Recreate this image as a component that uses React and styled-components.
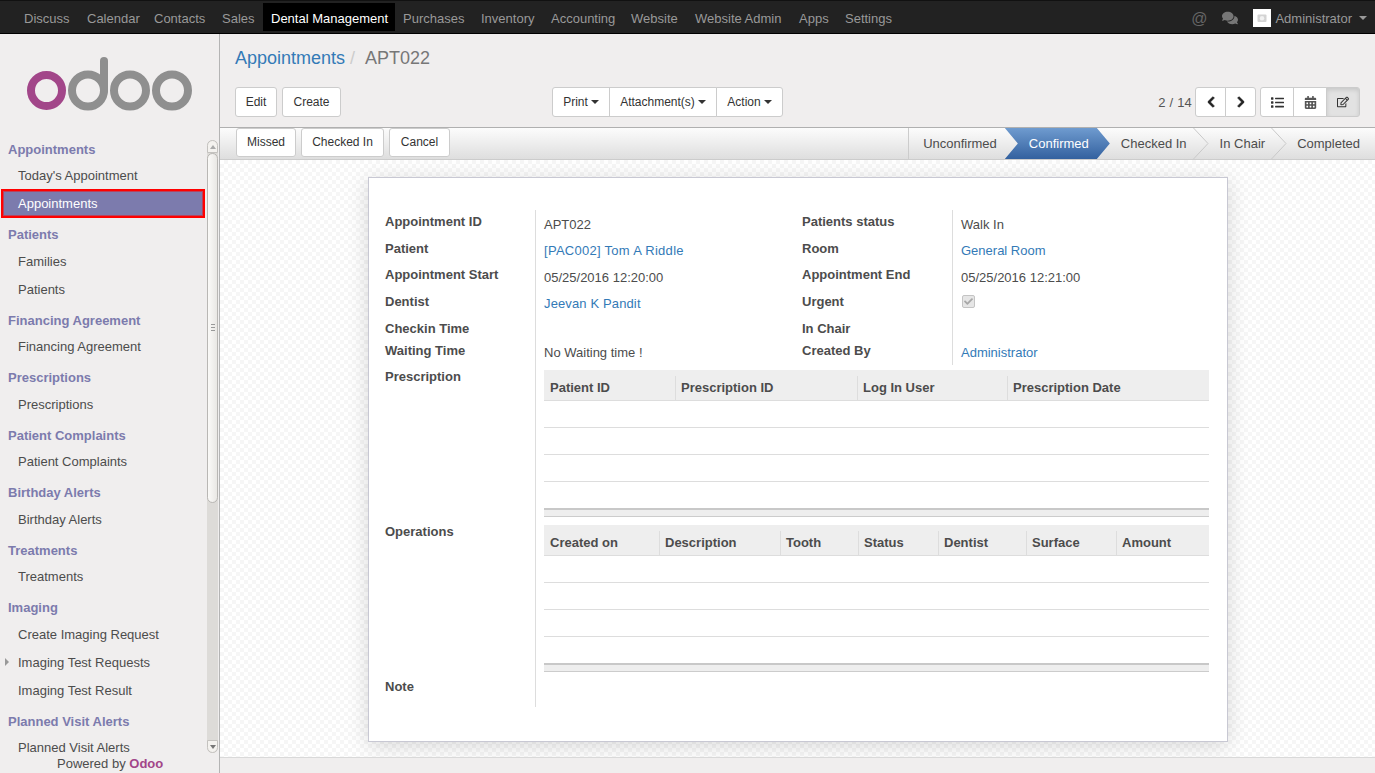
// App.jsx
import React from 'react';
import styled, { createGlobalStyle } from 'styled-components';
import {
  FaComments,
  FaChevronLeft,
  FaChevronRight,
  FaList,
  FaCalendarAlt,
  FaRegEdit,
  FaCheck,
} from 'react-icons/fa';

const GlobalStyle = createGlobalStyle`
  html, body {
    margin: 0;
    height: 100%;
    overflow: hidden;
  }
  body {
    font-family: "Liberation Sans", Arial, sans-serif;
    font-size: 13px;
    line-height: 15px;
    color: #4c4c4c;
  }
  * {
    box-sizing: border-box;
  }
`;

const Page = styled.div`
  display: flex;
  flex-direction: column;
  width: 100%;
  height: 100vh;
  overflow: hidden;
`;

const TopBar = styled.div`
  display: flex;
  align-items: flex-start;
  justify-content: space-between;
  flex: 0 0 34px;
  padding: 3px 8px 0 16px;
  background: #222;
  border-top: 1px solid #111;
  border-bottom: 1px solid #000;
`;

const TopMenu = styled.div`
  display: flex;
`;

const TopItem = styled.div`
  width: ${(props) => props.$w}px;
  height: 28px;
  margin-top: -1px;
  padding-left: 8px;
  line-height: 31px;
  white-space: nowrap;
  color: ${(props) => (props.$active ? '#fff' : '#999')};
  background: ${(props) => (props.$active ? '#000' : 'transparent')};
`;

const TopRight = styled.div`
  display: flex;
  align-items: center;
  height: 28px;
  color: #777;
`;

const TopIcon = styled.span`
  display: flex;
  font-size: ${(props) => props.$size}px;
  margin-right: ${(props) => props.$gap}px;
`;

const AtSign = styled.span`
  margin-right: 15px;
  font-size: 16px;
  color: #666;
`;

const Avatar = styled.span`
  display: flex;
  align-items: center;
  justify-content: center;
  width: 18px;
  height: 18px;
  margin-right: 4px;
  background: #fff;
`;

const UserName = styled.span`
  color: #999;
`;

const TopCaret = styled.span`
  width: 0;
  height: 0;
  margin-left: 7px;
  border-top: 4px solid #999;
  border-left: 4px solid transparent;
  border-right: 4px solid transparent;
`;

const Body = styled.div`
  display: flex;
  flex: 1;
  min-height: 0;
`;

const Sidebar = styled.aside`
  display: flex;
  flex-direction: column;
  flex: 0 0 220px;
  background: #f0eeee;
  border-right: 1px solid #b4b4b4;
`;

const LogoWrap = styled.div`
  flex: 0 0 98px;
  padding: 23px 0 0 26px;
`;

const SideBody = styled.div`
  display: flex;
  flex: 0 0 621px;
  min-height: 0;
`;

const SideNav = styled.nav`
  flex: 0 0 206px;
`;

const SideHeader = styled.div`
  height: ${(props) => (props.$odd ? '30px' : '29px')};
  padding: 10px 0 0 8px;
  font-weight: bold;
  color: #7c7bad;
`;

const SideItem = styled.div`
  position: relative;
  height: ${(props) => (props.$active ? '29px' : '28px')};
  margin-left: ${(props) => (props.$active ? '1px' : '0')};
  margin-bottom: ${(props) => (props.$active ? '-1px' : '0')};
  margin-right: ${(props) => (props.$active ? '1px' : '0')};
  padding-left: ${(props) => (props.$active ? '15px' : '18px')};
  line-height: ${(props) => (props.$active ? '25px' : '30px')};
  white-space: nowrap;
  color: ${(props) => (props.$active ? '#fff' : '#4c4c4c')};
  background: ${(props) => (props.$active ? '#7c7bad' : 'transparent')};
  border: ${(props) => (props.$active ? '2px solid #f00' : '0')};
  box-shadow: ${(props) => (props.$active ? 'inset 0 0 0 1px rgba(255, 0, 0, 0.45)' : 'none')};

  ${(props) =>
    props.$more &&
    `&::before {
      content: '';
      position: absolute;
      left: 5px;
      top: 10px;
      border-left: 4px solid #999;
      border-top: 4px solid transparent;
      border-bottom: 4px solid transparent;
    }`}
`;

const ScrollBar = styled.div`
  display: flex;
  flex-direction: column;
  flex: 0 0 11px;
  margin: 8px 0 0 1px;
  background: #dddbd8;
  border-radius: 6px;
`;

const ScrollButton = styled.div`
  display: flex;
  align-items: center;
  justify-content: center;
  flex: 0 0 13px;
  background: #f4f2ef;
  border: 1px solid #c4c2bf;
  border-radius: ${(props) => (props.$down ? '0 0 6px 6px' : '6px 6px 0 0')};
`;

const ScrollArrow = styled.span`
  width: 0;
  height: 0;
  border-left: 3px solid transparent;
  border-right: 3px solid transparent;
  ${(props) =>
    props.$down ? 'border-top: 4px solid #777;' : 'border-bottom: 4px solid #aaa;'}
`;

const ScrollThumb = styled.div`
  display: flex;
  align-items: center;
  justify-content: center;
  flex: 0 0 350px;
  background: linear-gradient(to right, #fbfaf8, #e9e7e4);
  border: 1px solid #b9b7b4;
  border-radius: 6px;
`;

const ScrollGrip = styled.span`
  width: 4px;
  height: 8px;
  background: repeating-linear-gradient(to bottom, #999 0 1px, transparent 1px 3px);
`;

const ScrollRest = styled.div`
  flex: 1;
`;

const PoweredBy = styled.div`
  flex: 1;
  padding: 3px 0 0 57px;
`;

const OdooName = styled.span`
  font-weight: bold;
  color: #a24689;
`;

const Main = styled.main`
  display: flex;
  flex-direction: column;
  flex: 1;
  min-width: 0;
  background: #f0eeee;
`;

const ControlPanel = styled.div`
  flex: 0 0 93px;
  padding: 12px 15px 0;
`;

const Breadcrumb = styled.div`
  display: flex;
  height: 24px;
  font-size: 18px;
  line-height: 24px;
`;

const CrumbLink = styled.span`
  color: #337ab7;
`;

const CrumbSep = styled.span`
  padding: 0 5px 0 5px;
  color: #ccc;
`;

const CrumbCurrent = styled.span`
  padding-left: 5px;
  color: #777;
`;

const ButtonRow = styled.div`
  display: flex;
  align-items: center;
  margin-top: 17px;
`;

const LeftButtons = styled.div`
  display: flex;
  gap: 5px;
  flex: 0 0 317px;
`;

const Group = styled.div`
  display: flex;
`;

const Button = styled.div`
  display: flex;
  align-items: center;
  justify-content: center;
  height: 30px;
  width: ${(props) => (props.$width ? `${props.$width}px` : 'auto')};
  font-size: ${(props) => (props.$icon ? `${props.$icon}px` : '12px')};
  color: ${(props) => (props.$ink ? props.$ink : '#333')};
  white-space: nowrap;
  background: ${(props) => (props.$on ? '#e2e2e2' : '#fff')};
  border: 1px solid #ccc;
  border-radius: 3px;
  box-shadow: ${(props) => (props.$on ? 'inset 0 2px 4px rgba(0,0,0,.12)' : 'none')};

  ${Group} > & {
    border-radius: 0;
    margin-left: -1px;
  }
  ${Group} > &:first-child {
    border-radius: 3px 0 0 3px;
    margin-left: 0;
  }
  ${Group} > &:last-child {
    border-radius: 0 3px 3px 0;
  }
`;

const Caret = styled.span`
  width: 0;
  height: 0;
  margin-left: 3px;
  border-top: 4px solid #333;
  border-left: 4px solid transparent;
  border-right: 4px solid transparent;
`;

const RightTools = styled.div`
  display: flex;
  align-items: center;
  margin-left: auto;
`;

const Pager = styled.span`
  margin-right: 3px;
  font-size: 13px;
  letter-spacing: 0.2px;
  color: #555;
`;

const ViewGroup = styled(Group)`
  margin-left: 4px;
`;

const StatusBar = styled.div`
  display: flex;
  align-items: stretch;
  justify-content: space-between;
  flex: 0 0 33px;
  padding-left: 16px;
  background: linear-gradient(to bottom, #fcfcfc, #dedede);
  border-top: 1px solid #b0b0b0;
  border-bottom: 1px solid #ccc;
`;

const StateButtons = styled.div`
  display: flex;
  gap: 5px;
`;

const StateButton = styled(Button)`
  height: 29px;
  color: #333;
`;

const Steps = styled.div`
  display: flex;
  align-items: center;
  padding-right: 15px;
  border-left: 1px solid #ccc;
`;

const Step = styled.div`
  padding-left: ${(props) => props.$pad}px;
  padding-right: ${(props) => props.$right}px;
  white-space: nowrap;
  color: #4c4c4c;
`;

const ActiveStep = styled.div`
  display: flex;
  align-items: center;
  align-self: stretch;
  width: 105px;
  padding-left: 24px;
  color: #fff;
  background: linear-gradient(to bottom, #6f9bcf, #33619f);
  clip-path: polygon(0 0, 92px 0, 100% 50%, 92px 100%, 0 100%, 13px 50%);
`;

const Content = styled.div`
  flex: 1;
  min-height: 0;
  padding: 17px 0 0 1px;
  background: repeating-conic-gradient(#f6f6f6 0 25%, #fff 0 50%) 0 0 / 8px 8px;
`;

const Sheet = styled.div`
  width: 860px;
  height: 565px;
  margin: 0 auto;
  padding: 32px 18px 0 16px;
  background: #fff;
  border: 1px solid #c8c8d3;
  box-shadow: 0 4px 20px rgba(0, 0, 0, 0.15);
`;

const FormGrid = styled.div`
  display: grid;
  grid-template-columns: 150px 267px 150px 257px;
  grid-template-rows: 27px 26px 27px 27px 22px 26px 155px 155px 32px;
`;

const Label = styled.div`
  padding-top: 4px;
  font-weight: bold;
  color: #4c4c4c;
`;

const Value = styled.div`
  grid-column: ${(props) => (props.$wide ? '2 / 5' : 'auto')};
  padding: ${(props) => (props.$wide ? '5px' : props.$tight ? '6px' : '7px')} 0 0 8px;
  border-left: 1px solid #ddd;
  white-space: nowrap;
`;

const FieldLink = styled.span`
  letter-spacing: ${(props) => props.$track || 0}px;
  color: #337ab7;
`;

const CheckBox = styled.span`
  display: flex;
  align-items: center;
  justify-content: center;
  width: 13px;
  height: 13px;
  margin: -2px 0 0 1px;
  font-size: 9px;
  color: #a8a8a8;
  background: #e6e6e6;
  border: 1px solid #c4c4c4;
  border-radius: 2px;
`;

const DataTable = styled.table`
  width: 100%;
  table-layout: fixed;
  border-collapse: separate;
  border-spacing: 0;
`;

const HeadCell = styled.th`
  width: ${(props) => props.$w}px;
  height: 31px;
  padding: 4px 0 0 6px;
  font-weight: bold;
  text-align: left;
  color: #4c4c4c;
  background: #eee;
  border-bottom: 1px solid #ddd;
  ${(props) =>
    props.$sep &&
    `background: linear-gradient(#ddd, #ddd) left 6px / 1px 100% no-repeat, #eee;`}
`;

const Row = styled.tr`
  height: ${(props) => (props.$last ? '26px' : '27px')};
`;

const Cell = styled.td`
  padding: 0;
  border-bottom: ${(props) => (props.$last ? '0' : '1px solid #ddd')};
`;

const FootCell = styled.td`
  height: 9px;
  padding: 0;
  background: #eee;
  border-top: 2px solid #c8c8c8;
  border-bottom: 1px solid #ccc;
`;

const BottomStrip = styled.div`
  flex: 0 0 16px;
  background: #f0eeee;
  border-top: 1px solid #d9d9d9;
`;

const topMenu = [
  ['Discuss', 63],
  ['Calendar', 67],
  ['Contacts', 68],
  ['Sales', 49],
  ['Dental Management', 132],
  ['Purchases', 78],
  ['Inventory', 70],
  ['Accounting', 80],
  ['Website', 64],
  ['Website Admin', 104],
  ['Apps', 46],
  ['Settings', 63],
];

const sideMenu = [
  { title: 'Appointments', items: ["Today's Appointment", 'Appointments'] },
  { title: 'Patients', items: ['Families', 'Patients'] },
  { title: 'Financing Agreement', items: ['Financing Agreement'] },
  { title: 'Prescriptions', items: ['Prescriptions'] },
  { title: 'Patient Complaints', items: ['Patient Complaints'] },
  { title: 'Birthday Alerts', items: ['Birthday Alerts'] },
  { title: 'Treatments', items: ['Treatments'] },
  { title: 'Imaging', items: ['Create Imaging Request', 'Imaging Test Requests', 'Imaging Test Result'] },
  { title: 'Planned Visit Alerts', items: ['Planned Visit Alerts'] },
];

const prescriptionCols = [
  ['Patient ID', 131],
  ['Prescription ID', 182],
  ['Log In User', 150],
  ['Prescription Date', 202],
];

const operationCols = [
  ['Created on', 115],
  ['Description', 121],
  ['Tooth', 78],
  ['Status', 80],
  ['Dentist', 88],
  ['Surface', 90],
  ['Amount', 93],
];

const OdooLogo = () => (
  <svg width="168" height="56" viewBox="0 0 168 56">
    <circle cx="20.5" cy="33.5" r="15.5" fill="none" stroke="#a24689" strokeWidth="8" />
    <circle cx="62" cy="33.5" r="16" fill="none" stroke="#8f8f8f" strokeWidth="8" />
    <path d="M78 33.5V4" fill="none" stroke="#8f8f8f" strokeWidth="8" strokeLinecap="round" />
    <circle cx="104" cy="33.5" r="16" fill="none" stroke="#8f8f8f" strokeWidth="8" />
    <circle cx="146" cy="33.5" r="16" fill="none" stroke="#8f8f8f" strokeWidth="8" />
  </svg>
);

const StepChevron = () => (
  <svg width="16" height="31" viewBox="0 0 16 31">
    <path d="M0.5 0L15 15.5L0.5 31" fill="none" stroke="#c9c9c9" />
  </svg>
);

const ListTable = ({ cols }) => (
  <DataTable>
    <thead>
      <tr>
        {cols.map(([name, w], i) => (
          <HeadCell key={name} $w={w} $sep={i > 0}>
            {name}
          </HeadCell>
        ))}
      </tr>
    </thead>
    <tbody>
      {[0, 1, 2, 3].map((n) => (
        <Row key={n} $last={n === 3}>
          <Cell colSpan={cols.length} $last={n === 3} />
        </Row>
      ))}
    </tbody>
    <tfoot>
      <tr>
        <FootCell colSpan={cols.length} />
      </tr>
    </tfoot>
  </DataTable>
);

const App = () => {
  return (
    <Page>
      <GlobalStyle />
      <TopBar>
        <TopMenu>
          {topMenu.map(([name, w]) => (
            <TopItem key={name} $w={w} $active={name === 'Dental Management'}>
              {name}
            </TopItem>
          ))}
        </TopMenu>
        <TopRight>
          <AtSign>@</AtSign>
          <TopIcon $size={16} $gap={15}>
            <FaComments />
          </TopIcon>
          <Avatar>
            <svg width="10" height="10" viewBox="0 0 10 10">
              <rect x="0.5" y="1.5" width="9" height="7.5" rx="1" fill="#d4d4d4" />
              <circle cx="5" cy="5.2" r="2.2" fill="#f2f2f2" />
            </svg>
          </Avatar>
          <UserName>Administrator</UserName>
          <TopCaret />
        </TopRight>
      </TopBar>
      <Body>
        <Sidebar>
          <LogoWrap>
            <OdooLogo />
          </LogoWrap>
          <SideBody>
            <SideNav>
              {sideMenu.map((section, s) => (
                <div key={section.title}>
                  <SideHeader $odd={s % 2 === 1}>{section.title}</SideHeader>
                  {section.items.map((item) => (
                    <SideItem
                      key={item}
                      $active={s === 0 && item === 'Appointments'}
                      $more={item === 'Imaging Test Requests'}
                    >
                      {item}
                    </SideItem>
                  ))}
                </div>
              ))}
            </SideNav>
            <ScrollBar>
              <ScrollButton>
                <ScrollArrow />
              </ScrollButton>
              <ScrollThumb>
                <ScrollGrip />
              </ScrollThumb>
              <ScrollRest />
              <ScrollButton $down>
                <ScrollArrow $down />
              </ScrollButton>
            </ScrollBar>
          </SideBody>
          <PoweredBy>
            Powered by <OdooName>Odoo</OdooName>
          </PoweredBy>
        </Sidebar>
        <Main>
          <ControlPanel>
            <Breadcrumb>
              <CrumbLink>Appointments</CrumbLink>
              <CrumbSep>/</CrumbSep>
              <CrumbCurrent>APT022</CrumbCurrent>
            </Breadcrumb>
            <ButtonRow>
              <LeftButtons>
                <Button $width={42}>Edit</Button>
                <Button $width={59}>Create</Button>
              </LeftButtons>
              <Group>
                <Button $width={58}>
                  Print
                  <Caret />
                </Button>
                <Button $width={108}>
                  Attachment(s)
                  <Caret />
                </Button>
                <Button $width={67}>
                  Action
                  <Caret />
                </Button>
              </Group>
              <RightTools>
                <Pager>2 / 14</Pager>
                <Group>
                  <Button $width={31} $icon={12} $ink="#222">
                    <FaChevronLeft strokeWidth={40} />
                  </Button>
                  <Button $width={31} $icon={12} $ink="#222">
                    <FaChevronRight strokeWidth={40} />
                  </Button>
                </Group>
                <ViewGroup>
                  <Button $width={34} $icon={13}>
                    <FaList />
                  </Button>
                  <Button $width={34} $icon={13} $ink="#555">
                    <FaCalendarAlt />
                  </Button>
                  <Button $width={34} $icon={12} $on>
                    <FaRegEdit />
                  </Button>
                </ViewGroup>
              </RightTools>
            </ButtonRow>
          </ControlPanel>
          <StatusBar>
            <StateButtons>
              <StateButton $width={60}>Missed</StateButton>
              <StateButton $width={83}>Checked In</StateButton>
              <StateButton $width={61}>Cancel</StateButton>
            </StateButtons>
            <Steps>
              <Step $pad={14} $right={8}>
                Unconfirmed
              </Step>
              <ActiveStep>Confirmed</ActiveStep>
              <Step $pad={11} $right={6}>
                Checked In
              </Step>
              <StepChevron />
              <Step $pad={11} $right={6}>
                In Chair
              </Step>
              <StepChevron />
              <Step $pad={10} $right={0}>
                Completed
              </Step>
            </Steps>
          </StatusBar>
          <Content>
            <Sheet>
              <FormGrid>
                <Label>Appointment ID</Label>
                <Value>APT022</Value>
                <Label>Patients status</Label>
                <Value>Walk In</Value>

                <Label>Patient</Label>
                <Value $tight>
                  <FieldLink $track={0.28}>[PAC002] Tom A Riddle</FieldLink>
                </Value>
                <Label>Room</Label>
                <Value $tight>
                  <FieldLink>General Room</FieldLink>
                </Value>

                <Label>Appointment Start</Label>
                <Value>05/25/2016 12:20:00</Value>
                <Label>Appointment End</Label>
                <Value>05/25/2016 12:21:00</Value>

                <Label>Dentist</Label>
                <Value $tight>
                  <FieldLink $track={0.13}>Jeevan K Pandit</FieldLink>
                </Value>
                <Label>Urgent</Label>
                <Value>
                  <CheckBox>
                    <FaCheck />
                  </CheckBox>
                </Value>

                <Label>Checkin Time</Label>
                <Value />
                <Label>In Chair</Label>
                <Value />

                <Label>Waiting Time</Label>
                <Value $tight>No Waiting time !</Value>
                <Label>Created By</Label>
                <Value $tight>
                  <FieldLink>Administrator</FieldLink>
                </Value>

                <Label>Prescription</Label>
                <Value $wide>
                  <ListTable cols={prescriptionCols} />
                </Value>

                <Label>Operations</Label>
                <Value $wide>
                  <ListTable cols={operationCols} />
                </Value>

                <Label>Note</Label>
                <Value $wide />
              </FormGrid>
            </Sheet>
          </Content>
          <BottomStrip />
        </Main>
      </Body>
    </Page>
  );
};

export default App;
